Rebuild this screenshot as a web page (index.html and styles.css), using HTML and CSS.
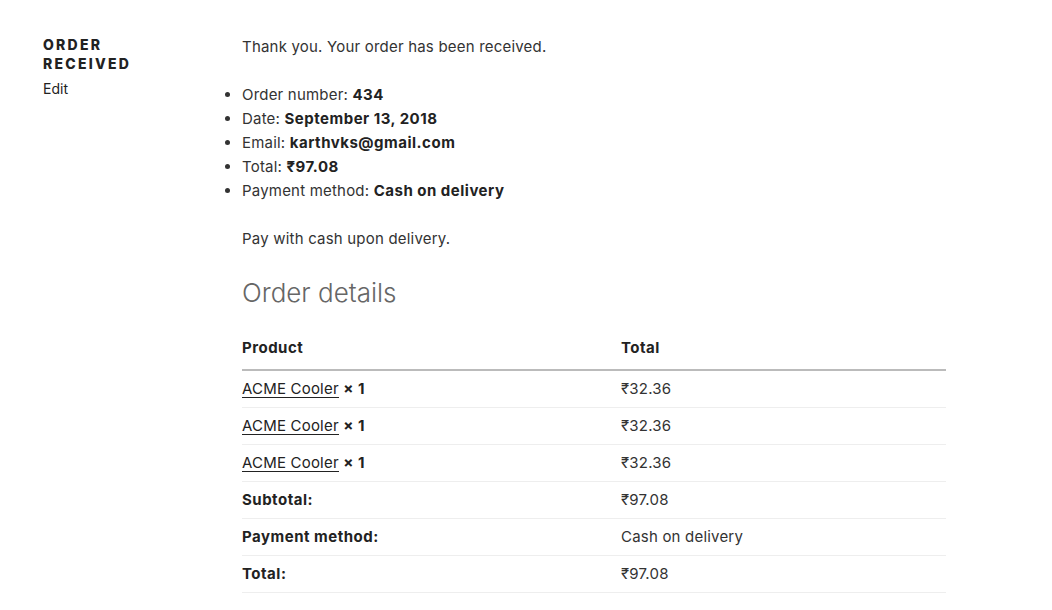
FILE: index.html
```html
<!DOCTYPE html>
<html lang="en">
<head>
<meta charset="utf-8">
<title>Order received</title>
<link rel="stylesheet" href="styles.css">
</head>
<body>
<div class="page">
  <header class="entry-header">
    <h1 class="entry-title">Order received</h1>
    <a class="edit-link" href="#">Edit</a>
  </header>
  <main class="entry-content">
    <p class="thanks">Thank you. Your order has been received.</p>
    <ul class="overview">
      <li>Order number: <strong>434</strong></li>
      <li>Date: <strong>September 13, 2018</strong></li>
      <li>Email: <strong>karthvks@gmail.com</strong></li>
      <li>Total: <strong>₹97.08</strong></li>
      <li>Payment method: <strong>Cash on delivery</strong></li>
    </ul>
    <p class="pay-note">Pay with cash upon delivery.</p>
    <h2 class="details-title">Order details</h2>
    <table class="details">
      <thead>
        <tr><th class="col-product">Product</th><th>Total</th></tr>
      </thead>
      <tbody>
        <tr><td><a href="#" class="prod">ACME Cooler</a> <strong class="qty">× 1</strong></td><td>₹32.36</td></tr>
        <tr><td><a href="#" class="prod">ACME Cooler</a> <strong class="qty">× 1</strong></td><td>₹32.36</td></tr>
        <tr><td><a href="#" class="prod">ACME Cooler</a> <strong class="qty">× 1</strong></td><td>₹32.36</td></tr>
      </tbody>
      <tfoot>
        <tr><th>Subtotal:</th><td>₹97.08</td></tr>
        <tr><th>Payment method:</th><td>Cash on delivery</td></tr>
        <tr><th>Total:</th><td>₹97.08</td></tr>
      </tfoot>
    </table>
  </main>
</div>
</body>
</html>
```
FILE: styles.css
```css
html, body {
  margin: 0;
  padding: 0;
  background: #fff;
}
body {
  font-family: "Inter", "Noto Sans", "DejaVu Sans", sans-serif;
  font-size: 15px;
  line-height: 24px;
  letter-spacing: 0.2px;
  color: #333;
}
.page {
  display: flex;
  padding: 35px 0 0 43px;
}
.entry-header {
  width: 199px;
  flex: none;
}
.entry-title {
  margin: 0;
  max-width: 140px;
  font-size: 14px;
  line-height: 19px;
  font-weight: 800;
  letter-spacing: 0.16em;
  text-transform: uppercase;
  color: #222;
}
.edit-link {
  display: block;
  margin-top: 6px;
  font-size: 14px;
  line-height: 20px;
  letter-spacing: 0;
  color: #222;
  text-decoration: none;
}
.entry-content {
  width: 704px;
}
.thanks, .pay-note {
  margin: 0;
}
.overview {
  margin: 24px 0;
  padding-left: 0;
  list-style: disc outside;
}
.overview li::marker {
  color: #333;
}
strong {
  font-weight: 700;
  letter-spacing: 0.5px;
  color: #222;
}
.details-title {
  margin: 24px 0 19px;
  font-size: 26px;
  line-height: 36px;
  font-weight: 300;
  letter-spacing: 0;
  color: #666;
}
.details {
  width: 100%;
  border-collapse: collapse;
}
.details th, .details td {
  text-align: left;
  padding: 6px 0;
  border-bottom: 1px solid #eee;
  font-size: 15px;
  line-height: 24px;
}
.details th {
  font-weight: 700;
  letter-spacing: 0.5px;
  color: #222;
}
.details .col-product {
  width: 379px;
}
.details thead th {
  padding: 6px 0 9px;
  border-bottom: 2px solid #bbb;
}
.prod {
  color: #222;
  text-decoration: none;
  box-shadow: inset 0 -1px 0 #222;
}
.qty {
  font-weight: 700;
}
```
